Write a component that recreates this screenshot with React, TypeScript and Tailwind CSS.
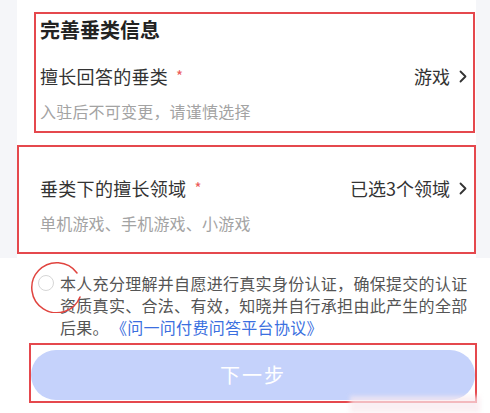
import * as React from 'react';

function Chevron() {
  return (
    <svg width="8" height="13" viewBox="0 0 8 13" fill="none" className="ml-[9px]">
      <path d="M1.5 1.5L6.5 6.5L1.5 11.5" stroke="#333" strokeWidth="1.8" strokeLinecap="round" strokeLinejoin="round" />
    </svg>
  );
}

function FieldRow({ label, value }: { label: string; value: string }) {
  return (
    <div className="flex items-center justify-between h-[26px]">
      <div className="flex items-center text-[18px] tracking-[0.3px] text-[#333]">
        <span>{label}</span>
        <span className="ml-[8px] text-[15px] text-[#ec5a5a]">*</span>
      </div>
      <div className="flex items-center text-[18px] text-[#333]">
        <span>{value}</span>
        <Chevron />
      </div>
    </div>
  );
}

export default function App() {
  return (
    <div
      className="relative w-[490px] h-[413px] overflow-hidden bg-white"
      style={{ fontFamily: '"Noto Sans CJK SC", "Noto Sans", sans-serif' }}
    >
      <div className="bg-[#f5f6f9] pl-[17px] pr-[14px]">
        <div className="bg-white h-[258px] pt-[12px]">
          <div className="ml-[17px] mr-[1px] h-[121px] border-2 border-[#e5484d] pl-[4px] pr-[6px]">
            <div className="pt-[2px] h-[30px] leading-[28px] text-[20px] font-bold text-[#222]">完善垂类信息</div>
            <div className="mt-[19px]">
              <FieldRow label="擅长回答的垂类" value="游戏" />
            </div>
            <div className="mt-[11px] leading-[22px] text-[16px] tracking-[0.2px] text-[#a3a3a3]">入驻后不可变更，请谨慎选择</div>
          </div>

          <div className="mt-[12px] h-[109px] border-2 border-[#e5484d] pl-[21px] pr-[7px] pt-[28px]">
            <FieldRow label="垂类下的擅长领域" value="已选3个领域" />
            <div className="mt-[11px] leading-[22px] text-[16px] tracking-[0.2px] text-[#a3a3a3]">单机游戏、手机游戏、小游戏</div>
          </div>
        </div>
      </div>

      <div className="flex items-start pl-[38px] mt-[14px]">
        <div className="mt-[3px] w-[16px] h-[16px] shrink-0 rounded-full border border-[#d6d6d6]" />
        <p className="ml-[6px] w-[412px] text-[16px] leading-[22px] tracking-[0.3px] text-[#555]">
          本人充分理解并自愿进行真实身份认证，确保提交的认证资质真实、合法、有效，知晓并自行承担由此产生的全部后果。
          <span className="ml-[10px] text-[#3b6fe0]">《问一问付费问答平台协议》</span>
        </p>
      </div>

      <div className="ml-[29px] mr-[13px] mt-[5px] h-[60px] border-2 border-[#e5484d] pt-[5px]">
        <button className="w-full h-[50px] rounded-full bg-[#c5d2fb] text-white text-[20px] tracking-[2px]">下一步</button>
      </div>

      <svg className="absolute left-[31px] top-[259px]" width="54" height="54" viewBox="0 0 54 54" fill="none">
        <path d="M46 14 A25 25 0 1 0 49 38" stroke="#e0443f" strokeWidth="1.5" strokeLinecap="round" />
      </svg>

      <div className="absolute left-[350px] top-[396px] w-[130px] h-[17px] bg-[#f9e9ee] opacity-70 blur-[2px]" />
    </div>
  );
}
